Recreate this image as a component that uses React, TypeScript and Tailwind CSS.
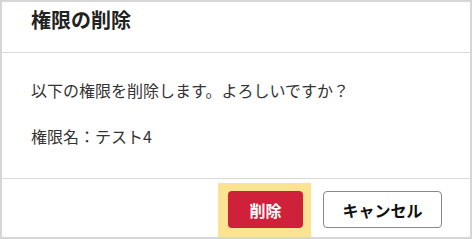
export default function App() {
  const font = { fontFamily: '"Noto Sans CJK JP", "Noto Sans", sans-serif' };
  return (
    <div
      className="w-[472px] h-[239px] bg-[#d6d6d6] pt-[2px] pl-[2px] pr-[2px] pb-[2px]"
      style={font}
    >
      <div className="flex flex-col h-full bg-white">
        {/* header */}
        <div className="h-[51px] pl-[29px] pt-[5px] border-b border-[#dadada]">
          <h1 className="text-[20px] font-bold text-[#222] leading-[26px]">権限の削除</h1>
        </div>

        {/* body */}
        <div className="h-[126px] pl-[29px] pt-[26px] text-[16px] text-[#333] border-b border-[#dadada]">
          <p className="leading-[22px]">以下の権限を削除します。よろしいですか？</p>
          <p className="leading-[22px] mt-[24px]">権限名：テスト4</p>
        </div>

        {/* footer */}
        <div className="flex-1 flex justify-end items-stretch pt-[4px] pr-[28px]">
          <div className="bg-[#fae391] pl-[10px] pr-[8px] pt-[8px]">
            <button className="w-[75px] h-[37px] rounded-[4px] bg-[#d0213a] text-white font-bold text-[16px]">
              削除
            </button>
          </div>
          <div className="pt-[8px] ml-[12px]">
            <button className="w-[119px] h-[37px] rounded-[4px] bg-white border border-[#888] text-[#111] font-bold text-[16px]">
              キャンセル
            </button>
          </div>
        </div>
      </div>
    </div>
  );
}
